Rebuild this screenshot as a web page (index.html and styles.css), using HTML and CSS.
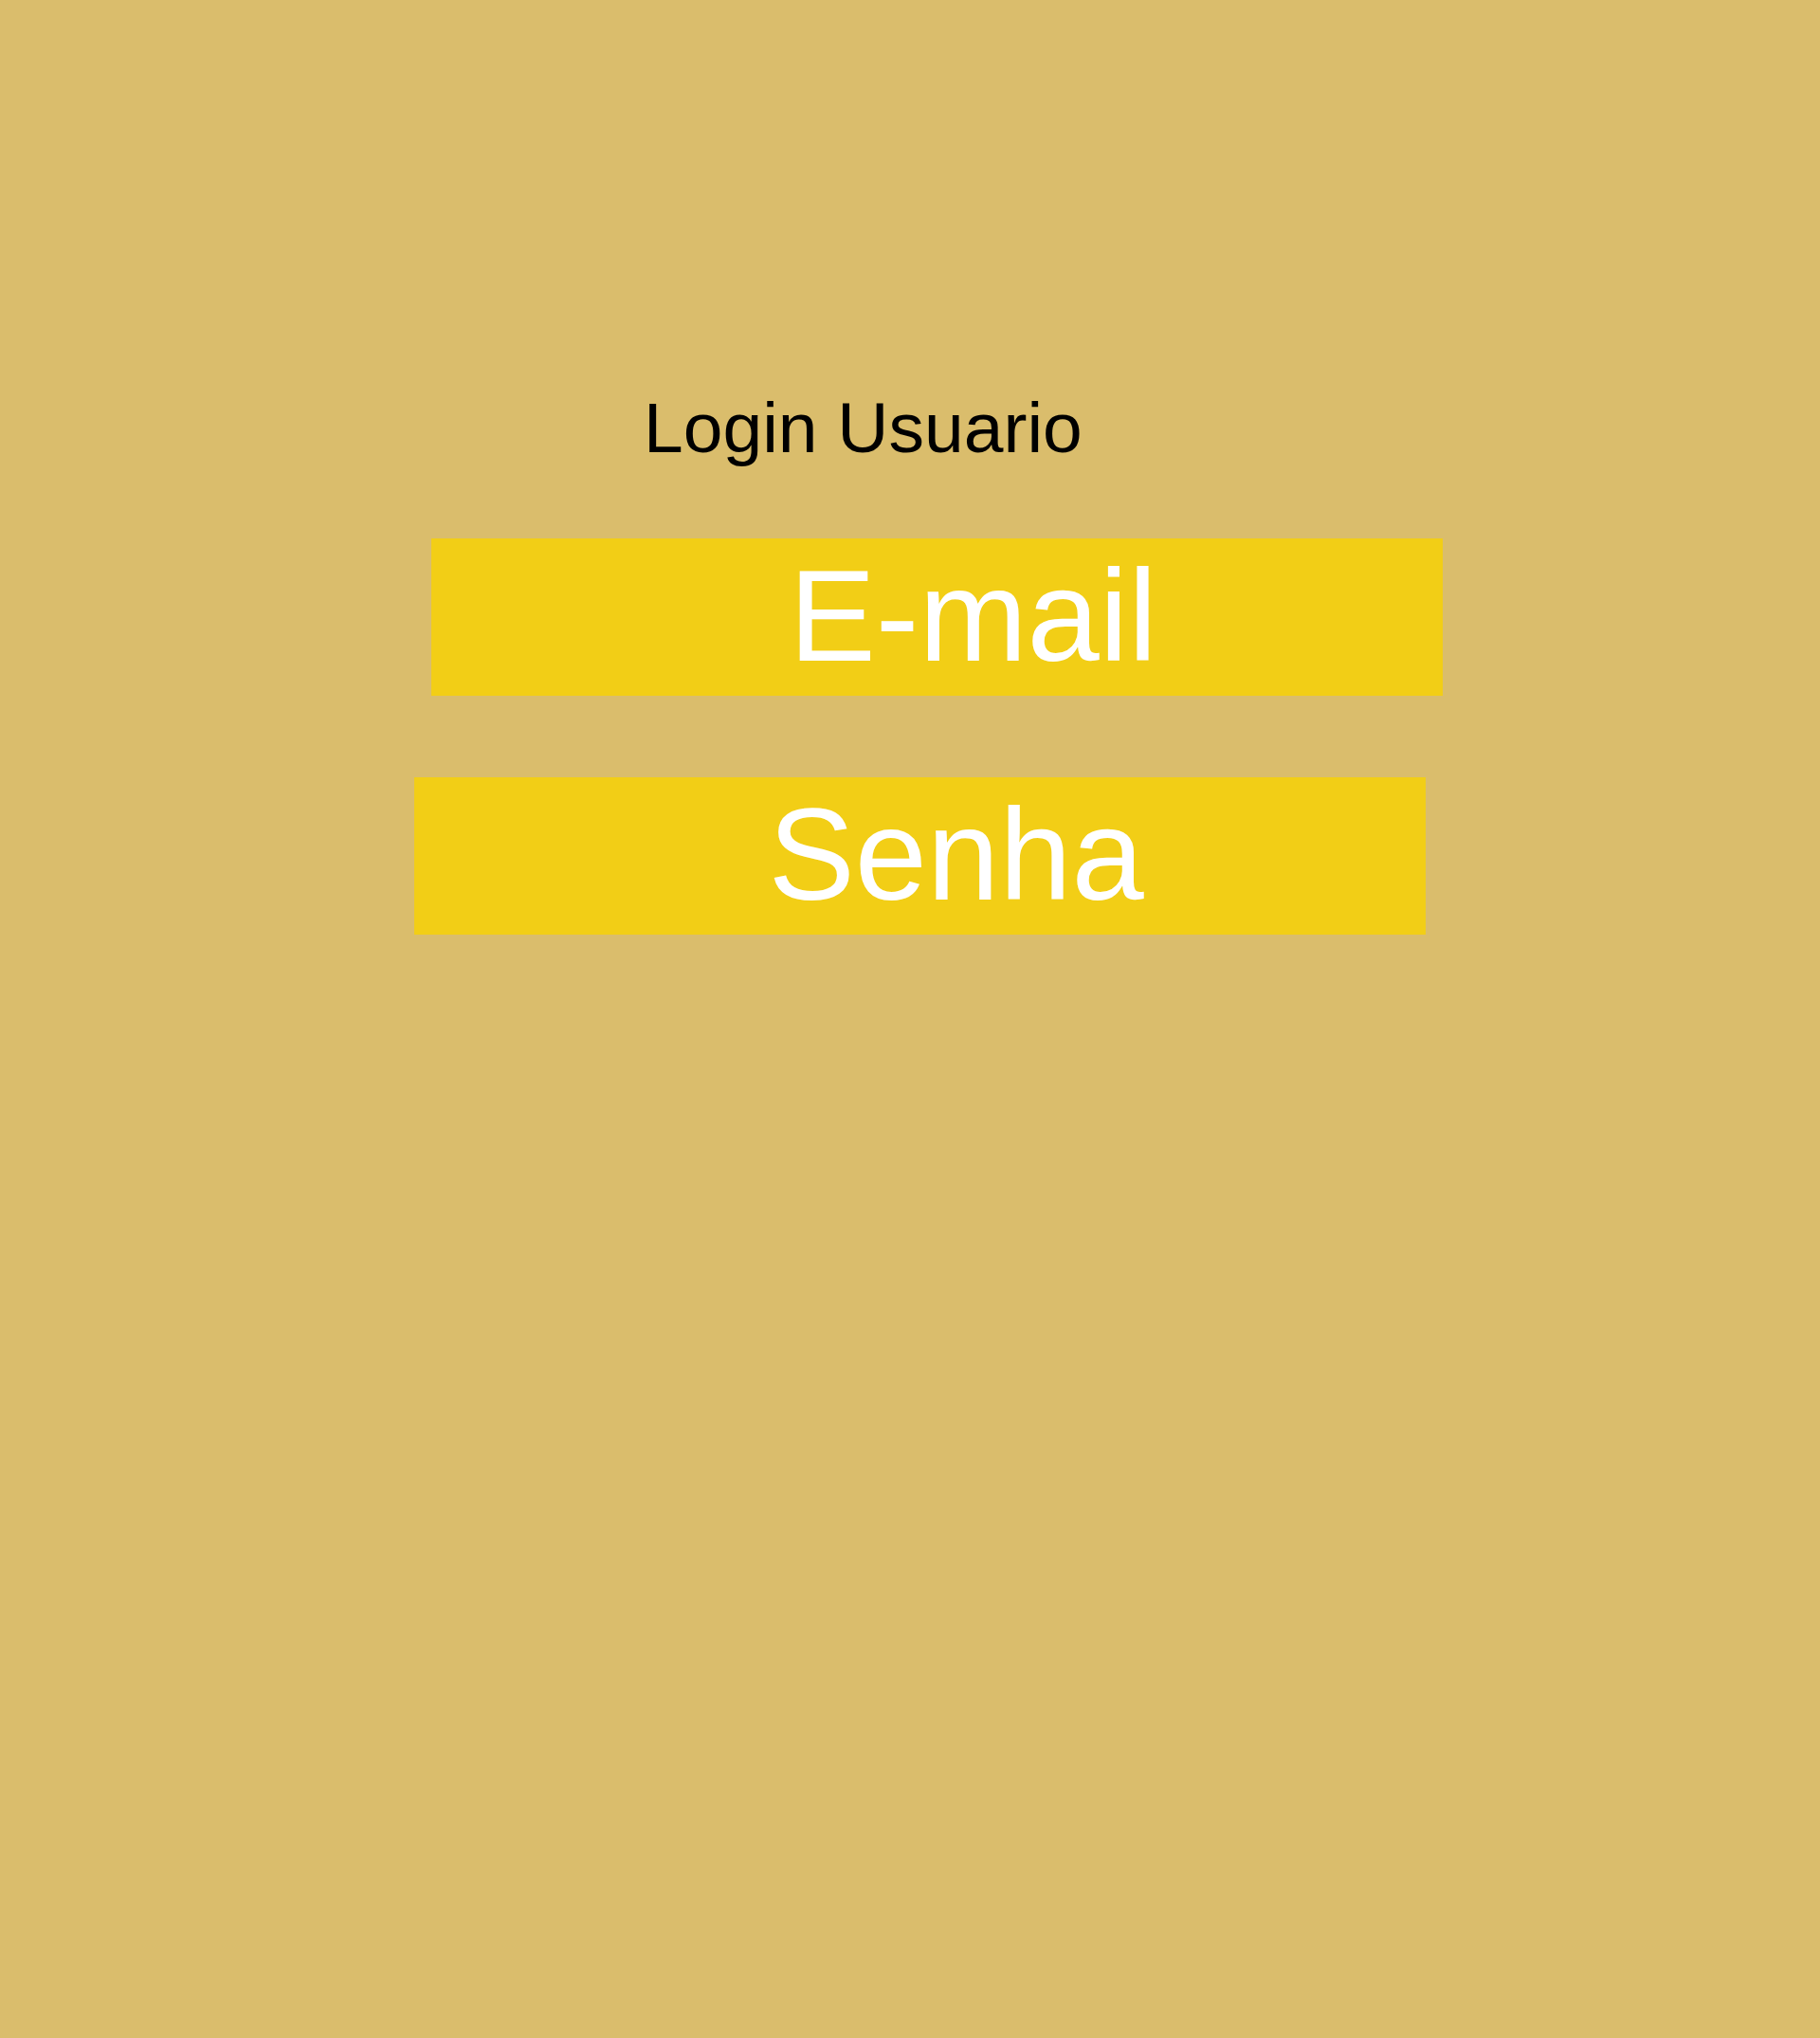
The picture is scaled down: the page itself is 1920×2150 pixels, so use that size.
FILE: index.html
```html
<!DOCTYPE html>
<html lang="pt">
<head>
<meta charset="utf-8">
<title>Login Usuario</title>
<link rel="stylesheet" href="styles.css">
</head>
<body>
<main class="login">
  <h1 class="title">Login Usuario</h1>
  <div class="field field-email">E-mail</div>
  <div class="field field-senha">Senha</div>
</main>
</body>
</html>
```
FILE: styles.css
```css
html, body {
  margin: 0;
  padding: 0;
}
body {
  background: #DABD6C;
  font-family: "Liberation Sans", Arial, sans-serif;
  min-height: 2150px;
}
.login {
  padding-top: 408px;
  display: flex;
  flex-direction: column;
}
.title {
  margin: 0 0 0 679px;
  font-size: 75px;
  font-weight: normal;
  line-height: 86px;
  color: #000;
}
.field {
  width: 1067px;
  height: 166px;
  box-sizing: border-box;
  background: #F2CE16;
  color: #fff;
  font-size: 137px;
  line-height: 158px;
  padding-top: 3px;
  padding-left: 76px;
  text-align: center;
  white-space: nowrap;
  overflow: hidden;
}
.field-email {
  margin: 74px 0 0 455px;
}
.field-senha {
  margin: 86px 0 0 437px;
}
```
